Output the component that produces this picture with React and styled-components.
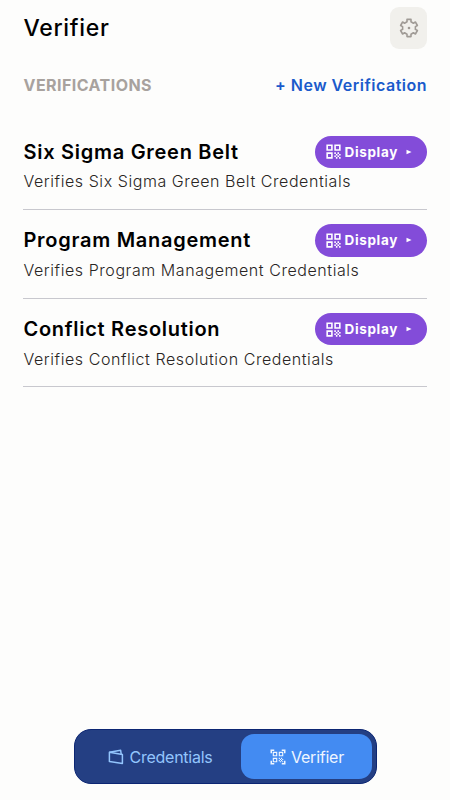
import React from 'react';
import styled, { createGlobalStyle } from 'styled-components';
import { MdQrCode, MdQrCodeScanner } from 'react-icons/md';

const GlobalStyle = createGlobalStyle`
  * {
    box-sizing: border-box;
  }
  body {
    margin: 0;
    background: #fdfdfc;
    font-family: Inter, "Liberation Sans", sans-serif;
  }
`;

const Screen = styled.div`
  display: flex;
  flex-direction: column;
  width: 100%;
  height: 100vh;
  padding: 7px 23px 16px 23px;
  background: #fdfdfc;
`;

const Header = styled.header`
  display: flex;
  align-items: center;
  justify-content: space-between;
  height: 42px;
`;

const PageTitle = styled.h1`
  margin: 0 0 0 0.5px;
  font-size: 23px;
  line-height: 28px;
  font-weight: 500;
  letter-spacing: 0.7px;
  color: #000;
`;

const SettingsButton = styled.button`
  display: flex;
  align-items: center;
  justify-content: center;
  width: 37px;
  height: 42px;
  padding: 0;
  border: none;
  border-radius: 9px;
  background: #f1f0ec;
  color: #a09b96;
`;

const SectionBar = styled.div`
  display: flex;
  align-items: center;
  justify-content: space-between;
  height: 24px;
  margin-top: 24px;
`;

const SectionLabel = styled.h2`
  margin: 0 0 0 0.5px;
  font-size: 16px;
  font-weight: 700;
  letter-spacing: 0.45px;
  color: #a8a29e;
`;

const NewLink = styled.button`
  padding: 0;
  border: none;
  background: none;
  font-family: inherit;
  font-size: 16px;
  font-weight: 600;
  letter-spacing: 0.5px;
  color: #1a5acb;
`;

const List = styled.div`
  display: flex;
  flex-direction: column;
  margin-top: 24.4px;
`;

const Row = styled.div`
  height: 88.6px;
  padding-top: 14px;
  border-bottom: 1px solid #c8c8ce;
`;

const RowTop = styled.div`
  display: flex;
  align-items: center;
  justify-content: space-between;
  height: 33px;
`;

const RowTitle = styled.h3`
  margin: 0 0 0 0.5px;
  font-size: 20px;
  line-height: 24px;
  font-weight: 600;
  letter-spacing: 0.72px;
  color: #000;
`;

const RowText = styled.p`
  margin: 3px 0 0 0.5px;
  font-size: 16px;
  line-height: 20px;
  font-weight: 300;
  letter-spacing: 0.56px;
  color: #292524;
`;

const DisplayButton = styled.button`
  display: flex;
  align-items: center;
  width: 112px;
  height: 32.5px;
  padding: 0 0 0 9px;
  border: none;
  border-radius: 17px;
  background: #834cd9;
  color: #fff;
  font-family: inherit;
  font-size: 13.5px;
  font-weight: 700;
  letter-spacing: 0.65px;
`;

const DisplayLabel = styled.span`
  margin-left: 1.5px;
`;

const Arrow = styled.svg`
  margin-left: 8px;
`;

const TabBar = styled.nav`
  display: flex;
  align-self: center;
  width: 303px;
  height: 55px;
  margin-top: auto;
  padding: 4px;
  border: 1px solid #0c2673;
  border-radius: 17px;
  background: #243f83;
`;

const Tab = styled.button`
  display: flex;
  align-items: center;
  justify-content: center;
  flex: ${(props) => (props.$active ? '0 0 131px' : '1')};
  gap: ${(props) => (props.$active ? '4px' : '5px')};
  padding: ${(props) => (props.$active ? '0 0 0 1px' : '0 0 0 2px')};
  border: none;
  border-radius: 13px;
  background: ${(props) => (props.$active ? '#438bf2' : 'transparent')};
  color: ${(props) => (props.$active ? '#eff6ff' : '#93c5fd')};
  font-family: inherit;
  font-size: 16px;
  letter-spacing: -0.25px;
`;

const GearIcon = () => (
  <svg width="20" height="20" viewBox="0 0 20 20" fill="none" stroke="currentColor" strokeWidth="1.6" strokeLinejoin="round">
    <path d="M8 1.4h4v2.4l2.4 1.4L16.4 4l2 3.5-2 1.1v2.8l2 1.1-2 3.5-2-1.2-2.4 1.4v2.4H8v-2.4l-2.4-1.4-2 1.2-2-3.5 2-1.1V8.6l-2-1.1 2-3.5 2 1.2L8 3.8z" />
    <circle cx="10" cy="10" r="1.3" fill="currentColor" stroke="none" />
  </svg>
);

const WalletIcon = () => (
  <svg width="16" height="16" viewBox="0 0 16 16" fill="none" stroke="currentColor" strokeWidth="1.5" strokeLinejoin="round">
    <path d="M1.4 3.2 14.4 5.4v9L1.4 12.6z" />
    <path d="M1.4 3.2 12.6 1.2 13.2 5" />
  </svg>
);

const verifications = [
  { id: 1, name: 'Six Sigma Green Belt', text: 'Verifies Six Sigma Green Belt Credentials' },
  { id: 2, name: 'Program Management', text: 'Verifies Program Management Credentials' },
  { id: 3, name: 'Conflict Resolution', text: 'Verifies Conflict Resolution Credentials' },
];

const App = () => {
  return (
    <>
      <GlobalStyle />
      <Screen>
        <Header>
          <PageTitle>Verifier</PageTitle>
          <SettingsButton>
            <GearIcon />
          </SettingsButton>
        </Header>
        <SectionBar>
          <SectionLabel>VERIFICATIONS</SectionLabel>
          <NewLink>+ New Verification</NewLink>
        </SectionBar>
        <List>
          {verifications.map((item) => (
            <Row key={item.id}>
              <RowTop>
                <RowTitle>{item.name}</RowTitle>
                <DisplayButton>
                  <MdQrCode size={19} />
                  <DisplayLabel>Display</DisplayLabel>
                  <Arrow width="6" height="6" viewBox="0 0 6 6" fill="currentColor">
                    <path d="M0.5 0.8 5.6 3 0.5 5.2z" />
                  </Arrow>
                </DisplayButton>
              </RowTop>
              <RowText>{item.text}</RowText>
            </Row>
          ))}
        </List>
        <TabBar>
          <Tab>
            <WalletIcon />
            Credentials
          </Tab>
          <Tab $active>
            <MdQrCodeScanner size={18} />
            Verifier
          </Tab>
        </TabBar>
      </Screen>
    </>
  );
};

export default App;
